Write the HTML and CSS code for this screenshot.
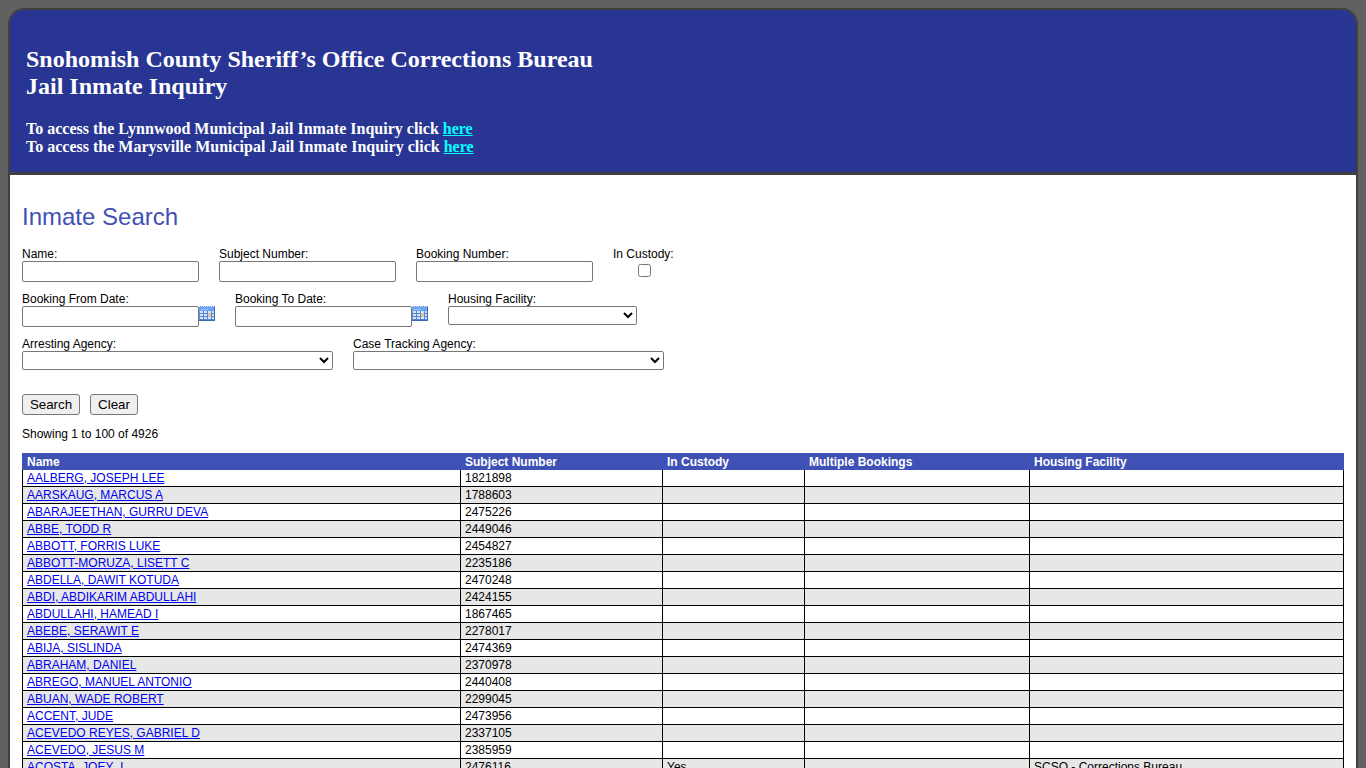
FILE: index.html
```html
<!DOCTYPE html>
<html lang="en">
<head>
<meta charset="utf-8">
<title>Jail Inmate Inquiry</title>
<link rel="stylesheet" href="styles.css">
</head>
<body>
<svg class="defs" width="0" height="0">
  <symbol id="calendar" viewBox="0 0 16 15">
    <rect width="16" height="15" fill="#5c8fe6"/>
    <rect x="0" y="1" width="15" height="4" fill="#6da2f5"/>
    <path d="M0 .5h16" stroke="#dbe9ff" stroke-dasharray="1 1"/>
    <path d="M2 3.5h7" stroke="#9cc3ff"/>
    <path d="M1 5h13v9H1z" fill="#5685d3"/>
    <path d="M1 6h14M1 9h14M1 12h14" stroke="#d3e4fb" stroke-width="2" stroke-dasharray="3 1"/>
    <path d="M9 7h3v4H9z" fill="#dcc795"/>
    <path d="M0 14.5h16M15.5 1v14" stroke="#3d68b4"/>
  </symbol>
</svg>
<div class="page">
  <header class="banner">
    <h1>Snohomish County Sheriff’s Office Corrections Bureau<br>Jail Inmate Inquiry</h1>
    <p>To access the Lynnwood Municipal Jail Inmate Inquiry click <a href="#">here</a><br>To access the Marysville Municipal Jail Inmate Inquiry click <a href="#">here</a></p>
  </header>
  <main class="content">
    <h2>Inmate Search</h2>
    <form class="search">
      <div class="row">
        <label class="field">Name:<input type="text" class="text"></label>
        <label class="field">Subject Number:<input type="text" class="text"></label>
        <label class="field">Booking Number:<input type="text" class="text"></label>
        <label class="field custody">In Custody:<input type="checkbox" class="check"></label>
      </div>
      <div class="row">
        <label class="field">Booking From Date:<span class="date"><input type="text" class="text"><svg class="cal"><use href="#calendar"/></svg></span></label>
        <label class="field">Booking To Date:<span class="date"><input type="text" class="text"><svg class="cal"><use href="#calendar"/></svg></span></label>
        <label class="field">Housing Facility:<select class="facility"></select></label>
      </div>
      <div class="row">
        <label class="field">Arresting Agency:<select class="agency"></select></label>
        <label class="field">Case Tracking Agency:<select class="agency"></select></label>
      </div>
      <div class="buttons"><button type="button" class="find">Search</button><button type="button" class="clear">Clear</button></div>
    </form>
    <div class="count">Showing 1 to 100 of 4926</div>
    <table class="results">
      <colgroup><col class="c1"><col class="c2"><col class="c3"><col class="c4"><col class="c5"></colgroup>
      <thead><tr><th>Name</th><th>Subject Number</th><th>In Custody</th><th>Multiple Bookings</th><th>Housing Facility</th></tr></thead>
      <tbody>
        <tr><td><a href="#">AALBERG, JOSEPH LEE</a></td><td>1821898</td><td></td><td></td><td></td></tr>
        <tr><td><a href="#">AARSKAUG, MARCUS A</a></td><td>1788603</td><td></td><td></td><td></td></tr>
        <tr><td><a href="#">ABARAJEETHAN, GURRU DEVA</a></td><td>2475226</td><td></td><td></td><td></td></tr>
        <tr><td><a href="#">ABBE, TODD R</a></td><td>2449046</td><td></td><td></td><td></td></tr>
        <tr><td><a href="#">ABBOTT, FORRIS LUKE</a></td><td>2454827</td><td></td><td></td><td></td></tr>
        <tr><td><a href="#">ABBOTT-MORUZA, LISETT C</a></td><td>2235186</td><td></td><td></td><td></td></tr>
        <tr><td><a href="#">ABDELLA, DAWIT KOTUDA</a></td><td>2470248</td><td></td><td></td><td></td></tr>
        <tr><td><a href="#">ABDI, ABDIKARIM ABDULLAHI</a></td><td>2424155</td><td></td><td></td><td></td></tr>
        <tr><td><a href="#">ABDULLAHI, HAMEAD I</a></td><td>1867465</td><td></td><td></td><td></td></tr>
        <tr><td><a href="#">ABEBE, SERAWIT E</a></td><td>2278017</td><td></td><td></td><td></td></tr>
        <tr><td><a href="#">ABIJA, SISLINDA</a></td><td>2474369</td><td></td><td></td><td></td></tr>
        <tr><td><a href="#">ABRAHAM, DANIEL</a></td><td>2370978</td><td></td><td></td><td></td></tr>
        <tr><td><a href="#">ABREGO, MANUEL ANTONIO</a></td><td>2440408</td><td></td><td></td><td></td></tr>
        <tr><td><a href="#">ABUAN, WADE ROBERT</a></td><td>2299045</td><td></td><td></td><td></td></tr>
        <tr><td><a href="#">ACCENT, JUDE</a></td><td>2473956</td><td></td><td></td><td></td></tr>
        <tr><td><a href="#">ACEVEDO REYES, GABRIEL D</a></td><td>2337105</td><td></td><td></td><td></td></tr>
        <tr><td><a href="#">ACEVEDO, JESUS M</a></td><td>2385959</td><td></td><td></td><td></td></tr>
        <tr><td><a href="#">ACOSTA, JOEY&nbsp; L</a></td><td>2476116</td><td>Yes</td><td></td><td>SCSO - Corrections Bureau</td></tr>
      </tbody>
    </table>
  </main>
</div>
</body>
</html>
```
FILE: styles.css
```css
* { box-sizing: border-box; }
html { height: 100%; background: #616161; }
body { margin: 0; padding: 8px 8px 0; height: 100%; overflow: hidden; font: 12px/14px Arial, "Liberation Sans", sans-serif; color: #000; }
.defs { display: block; height: 0; }
.page { border: 2px solid #404040; border-bottom: 0; border-radius: 16px 16px 0 0; }
.banner { height: 165px; padding: 36px 16px 0; background: #283593; border-bottom: 3px solid #404040; border-radius: 14px 14px 0 0; color: #fff; font-family: "Times New Roman", "Liberation Serif", serif; font-weight: bold; }
.banner h1 { margin: 0 0 20px; font-size: 24px; line-height: 27px; }
.banner p { margin: 0; font-size: 16px; line-height: 18px; }
.banner a { color: #0ff; }
.content { padding: 28px 12px 0; background: #fff; }
h2 { margin: 0 0 16px; font-size: 24px; line-height: 28px; font-weight: normal; color: #3f51b5; }
.row { display: flex; gap: 20px; height: 45px; }
.field { display: flex; flex-direction: column; align-items: flex-start; }
.custody { align-items: center; }
.text { display: block; width: 177px; height: 21px; margin: 0; padding: 1px 2px; border: 1px solid #767676; border-radius: 2px; background: #fff; }
.check { width: 13px; height: 13px; margin: 3px 0 0 2px; }
.date { display: flex; }
.cal { width: 16px; height: 15px; }
select { height: 19px; margin: 0; border: 1px solid #767676; border-radius: 2px; background-color: #fff; font: 13.333px Arial, "Liberation Sans", sans-serif; }
.facility { width: 189px; }
.agency { width: 311px; }
.buttons { display: flex; gap: 10px; margin-top: 12px; }
button { height: 21px; padding: 0; border: 1px solid #767676; border-radius: 3px; background: #efefef; color: #000; font: 13.333px/15px Arial, "Liberation Sans", sans-serif; }
.find { width: 58px; }
.clear { width: 48px; }
.count { margin: 12px 0; }
.results { width: 1322px; table-layout: fixed; border-collapse: separate; border-spacing: 0; }
.c1 { width: 439px; }
.c2 { width: 202px; }
.c3 { width: 142px; }
.c4 { width: 225px; }
.c5 { width: 314px; }
th { height: 17px; padding: 1px 4px 0; background: #3f51b5; color: #fff; text-align: left; line-height: 16px; }
td { height: 17px; padding: 0 4px; border: solid #000; border-width: 0 1px 1px 0; line-height: 16px; }
th:first-child { padding-left: 5px; }
td:first-child { border-left-width: 1px; }
tbody tr:nth-child(even) { background: #e7e7e7; }
td a { color: #00e; }
```
